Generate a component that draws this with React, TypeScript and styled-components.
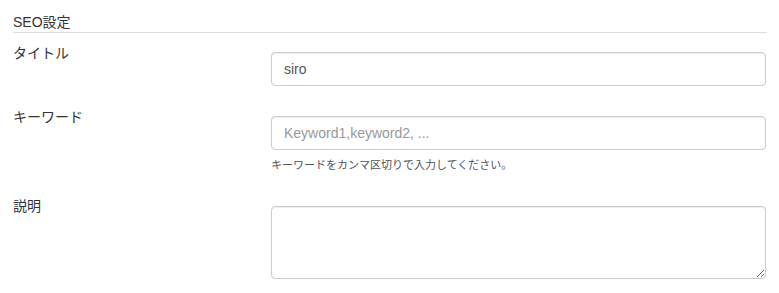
import { createGlobalStyle, styled } from "styled-components";

const GlobalStyle = createGlobalStyle`
    body {
        margin: 0;
        background: #fff;
        color: #333;
        font-family: "Liberation Sans", "Noto Sans CJK JP", sans-serif;
        font-size: 14px;
    }
`

const Page = styled.div`
    padding: 12px 12px 0 13px;
`

const SectionTitle = styled.div`
    line-height: 20px;
    font-size: 14px;
    border-bottom: 1px solid #ddd;
    margin-bottom: 10px;
`

const FormRow = styled.div`
    display: grid;
    grid-template-columns: 258px 1fr;
    margin-bottom: 21px;
`

const Label = styled.label`
    line-height: 20px;
    font-size: 14px;
    color: #333;
`

const Field = styled.div<{ $offset: number }>`
    padding-top: ${p => p.$offset}px;
    padding-right: 1px;
`

const TextInput = styled.input`
    display: block;
    box-sizing: border-box;
    width: 100%;
    height: 34px;
    padding: 6px 12px;
    font-family: inherit;
    font-size: 14px;
    color: #555;
    background: #fff;
    border: 1px solid #ccc;
    border-radius: 4px;
    box-shadow: inset 0 1px 1px rgba(0, 0, 0, .075);
    outline: none;

    &::placeholder {
        color: #999;
    }
`

const TextArea = styled.textarea`
    display: block;
    box-sizing: border-box;
    width: 100%;
    height: 73px;
    padding: 6px 12px;
    font-family: inherit;
    font-size: 14px;
    color: #555;
    border: 1px solid #ccc;
    border-radius: 4px;
    box-shadow: inset 0 1px 1px rgba(0, 0, 0, .075);
    resize: vertical;
    outline: none;
`

const Help = styled.p`
    margin: 5px 0 0;
    line-height: 20px;
    font-size: 11px;
    color: #555;
`

export default function App() {
    return (
        <Page>
            <GlobalStyle />
            <SectionTitle>SEO設定</SectionTitle>

            <FormRow>
                <Label>タイトル</Label>
                <Field $offset={9}>
                    <TextInput type="text" defaultValue="siro" />
                </Field>
            </FormRow>

            <FormRow>
                <Label>キーワード</Label>
                <Field $offset={9}>
                    <TextInput type="text" placeholder="Keyword1,keyword2, ..." />
                    <Help>キーワードをカンマ区切りで入力してください。</Help>
                </Field>
            </FormRow>

            <FormRow>
                <Label>説明</Label>
                <Field $offset={10}>
                    <TextArea />
                </Field>
            </FormRow>
        </Page>
    )
}
